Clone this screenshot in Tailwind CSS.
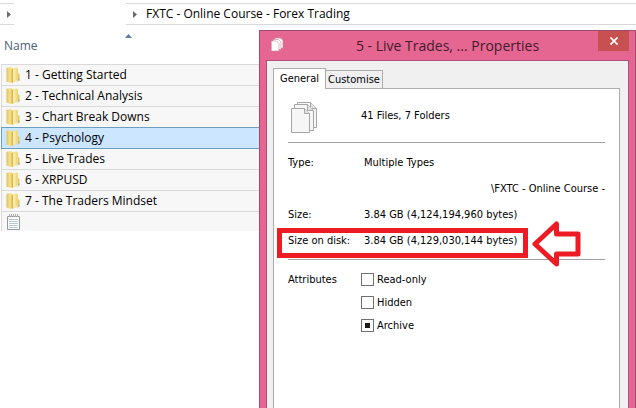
<!DOCTYPE html>
<html lang="en">
<head>
  <meta charset="utf-8" />
  <meta name="viewport" content="width=device-width, initial-scale=1" />
  <title>FXTC - Online Course - Forex Trading</title>
  <script src="https://cdn.jsdelivr.net/npm/@tailwindcss/browser@4"></script>
</head>
<body class="relative min-h-screen overflow-hidden bg-white font-['Open_Sans','Noto_Sans',sans-serif] text-xs text-black">
  <svg class="hidden">
    <symbol id="folder" viewBox="0 0 14 18">
      <path d="M.5 2 5.500 1l1 1v14l-2 1-4-1.500z" fill="#f3e08f" />
      <path d="M.5 2l2-.4v14.500l-2-.6z" fill="#e3cb70" />
      <path d="M4.500 3 10.500 1.500l1.500 1V14l-5.500 3-2-1z" fill="#f0da80" />
      <path d="M5.500 3.200 7 2.800v13.900l-1.500-.7z" fill="#d9b94e" />
      <path d="M7 3 9.500 2.300v12.500L7 16.300z" fill="#f8ebab" />
      <path d="M12 7l1.500 1v6.500L10 16.500l2-2z" fill="#e0c868" />
      <path d="M12.200 12.500h1.300v2h-1.300z" fill="#9db3a8" />
    </symbol>
    <symbol id="pages" viewBox="0 0 28 34">
      <g fill="#f6f6f6" stroke="#a6a6a6">
        <path d="M7.500 2.500h13l6 6v19h-19z" />
        <path d="M20.500 2.500v6h6" fill="#e2e2e2" />
        <path d="M4.500 4.500h13l6 6v20h-19z" />
        <path d="M17.500 4.500v6h6" fill="#e2e2e2" />
        <path d="M1.500 8.500h13l5 5v19h-18z" />
        <path d="M14.500 8.500v5h5" fill="#e2e2e2" />
      </g>
    </symbol>
  </svg>

  <!-- Address bar -->
  <nav class="flex h-[25px] items-stretch pt-[3px]">
    <div class="flex w-3.5 items-center border-y border-[#d9d9d9] pl-[7px]">
      <svg class="h-[7px] w-1" viewBox="0 0 4 7"><path d="M0 0 4 3.500 0 7z" fill="#6d6d6d" /></svg>
    </div>
    <div class="ml-28 flex flex-1 items-center border-y border-[#d9d9d9] pl-[7px]">
      <svg class="mr-[9px] h-[7px] w-1" viewBox="0 0 4 7"><path d="M0 0 4 3.500 0 7z" fill="#6d6d6d" /></svg>
      <a href="#">FXTC - Online Course - Forex Trading</a>
    </div>
  </nav>

  <!-- File list -->
  <main>
    <div class="flex h-[39px] items-start pl-1 pt-[9px]">
      <button type="button" class="flex w-32 justify-between leading-6 text-[#4c607a]">
        Name
        <svg class="h-1 w-[7px]" viewBox="0 0 7 4"><path d="M0 4 3.500 0 7 4z" fill="#5b7f96" /></svg>
      </button>
    </div>
    <ul class="pl-px">
      <li class="flex h-[21px] items-center gap-[5px] border-t border-l border-[#d9d9d9] bg-[#f7f7f7] pl-1"><svg class="h-[18px] w-3.5"><use href="#folder" /></svg>1 - Getting Started</li>
      <li class="flex h-[21px] items-center gap-[5px] border-t border-l border-[#d9d9d9] bg-[#f7f7f7] pl-1"><svg class="h-[18px] w-3.5"><use href="#folder" /></svg>2 - Technical Analysis</li>
      <li class="flex h-[21px] items-center gap-[5px] border-t border-l border-[#d9d9d9] bg-[#f7f7f7] pl-1"><svg class="h-[18px] w-3.5"><use href="#folder" /></svg>3 - Chart Break Downs</li>
      <li class="flex h-[22px] items-center gap-[5px] border border-[#6f9fbf] bg-[#cde6ff] pl-1"><svg class="h-[18px] w-3.5"><use href="#folder" /></svg>4 - Psychology</li>
      <li class="flex h-5 items-center gap-[5px] border-l border-[#d9d9d9] bg-[#f7f7f7] pl-1"><svg class="h-[18px] w-3.5"><use href="#folder" /></svg>5 - Live Trades</li>
      <li class="flex h-[21px] items-center gap-[5px] border-t border-l border-[#d9d9d9] bg-[#f7f7f7] pl-1"><svg class="h-[18px] w-3.5"><use href="#folder" /></svg>6 - XRPUSD</li>
      <li class="flex h-[21px] items-center gap-[5px] border-t border-l border-[#d9d9d9] bg-[#f7f7f7] pl-1"><svg class="h-[18px] w-3.5"><use href="#folder" /></svg>7 - The Traders Mindset</li>
      <li class="flex h-5 items-center border-t border-l border-[#d9d9d9] bg-[#f7f7f7] pl-[5px]">
        <svg class="h-4 w-[13px]" viewBox="0 0 13 16">
          <path d="M.5 2.500h12v13H.5z" fill="#fff" stroke="#999" />
          <path d="M2 5.500h9M2 7.500h9M2 9.500h9M2 11.500h9M2 13.500h9" stroke="#b5cbd8" />
          <path d="M2.500 0v3M4.500 0v3M6.500 0v3M8.500 0v3M10.500 0v3" stroke="#aaa" />
        </svg>
      </li>
    </ul>
  </main>

  <!-- Properties window -->
  <section class="absolute top-[30px] right-0 bottom-0 left-[259px] flex flex-col border-x border-t border-[#a04a70] bg-[#e56691] px-1.5">
    <header class="flex h-[29px] items-start">
      <svg class="mt-1.5 ml-[5px] h-[15px] w-3" viewBox="0 0 12 15">
        <g fill="#fff" stroke="#c98aa2" stroke-width=".6">
          <path d="M4 1h5.500L12 3.500V11H4z" />
          <path d="M2 2.500h5.500L10 5v7.500H2z" />
          <path d="M.3 4h5.500L8 6.500V14H.3z" />
        </g>
      </svg>
      <h1 class="flex-1 pl-[14px] text-center text-[14px] leading-[29px] text-[#471a2d]">5 - Live Trades, ... Properties</h1>
      <button type="button" aria-label="Close" class="flex h-5 w-[31px] items-center justify-center bg-[#c75050]">
        <svg class="h-2 w-2" viewBox="0 0 8 8"><path d="M.5.5l7 7M7.500.5l-7 7" stroke="#fff" stroke-width="1.700" /></svg>
      </button>
    </header>

    <div class="flex flex-1 flex-col border-x border-t border-[#b05078] bg-[#f0f0f0] px-1.5 pt-[7px] font-['DejaVu_Sans_Condensed','DejaVu_Sans',sans-serif] text-[11px]">
      <div class="flex items-end">
        <button type="button" class="z-10 -mb-px h-[21px] w-[53px] border border-b-0 border-[#acacac] bg-white">General</button>
        <button type="button" class="-ml-px h-[18px] w-[58px] border border-b-0 border-[#acacac] bg-[#f0f0f0] pt-px">Customise</button>
      </div>
      <div class="mr-0.5 flex-1 border-x border-t border-[#acacac] bg-white px-3.5">
        <div class="flex h-[54px] items-center border-b border-[#a0a0a0] pt-0.5 pl-0.5">
          <svg class="h-[34px] w-7"><use href="#pages" /></svg>
          <span class="pl-[43px]">41 Files, 7 Folders</span>
        </div>
        <dl class="grid grid-cols-[76px_1fr] auto-rows-[26px] items-center border-b border-[#a0a0a0] pt-[7px] pb-[5px]">
          <dt>Type:</dt><dd>Multiple Types</dd>
          <dd class="col-span-2 text-right">\FXTC - Online Course -</dd>
          <dt>Size:</dt><dd>3.84 GB (4,124,194,960 bytes)</dd>
          <dt class="relative">Size on disk:
            <!-- Highlight around the row and the arrow that points to it -->
            <span class="absolute -top-[6px] -left-[11px] h-[30px] w-[251px] border-[5px] border-[#ed1c24]"></span>
            <svg class="absolute -top-[13px] left-[244px] h-[46px] w-[50px]" viewBox="0 0 50 46">
              <path d="M3 23 24.500 3v10H46v20H24.500v10z" fill="#fff" stroke="#ed1c24" stroke-width="5" stroke-linejoin="round" />
            </svg>
          </dt><dd>3.84 GB (4,129,030,144 bytes)</dd>
        </dl>
        <fieldset class="grid grid-cols-[73px_1fr] pt-2">
          <div class="leading-[23px]">Attributes</div>
          <div>
            <label class="flex h-[23px] items-center gap-[3px]"><input type="checkbox" class="h-[13px] w-[13px] appearance-none border border-[#707070] bg-white" /><span class="pt-0.5">Read-only</span></label>
            <label class="flex h-[23px] items-center gap-[3px]"><input type="checkbox" class="h-[13px] w-[13px] appearance-none border border-[#707070] bg-white" /><span class="pt-0.5">Hidden</span></label>
            <label class="flex h-[23px] items-center gap-[3px]"><input type="checkbox" checked class="h-[13px] w-[13px] appearance-none border border-[#707070] bg-white checked:bg-[#1a1a1a] checked:shadow-[inset_0_0_0_3px_#fff]" /><span class="pt-0.5">Archive</span></label>
          </div>
        </fieldset>
      </div>
    </div>
  </section>
</body>
</html>
